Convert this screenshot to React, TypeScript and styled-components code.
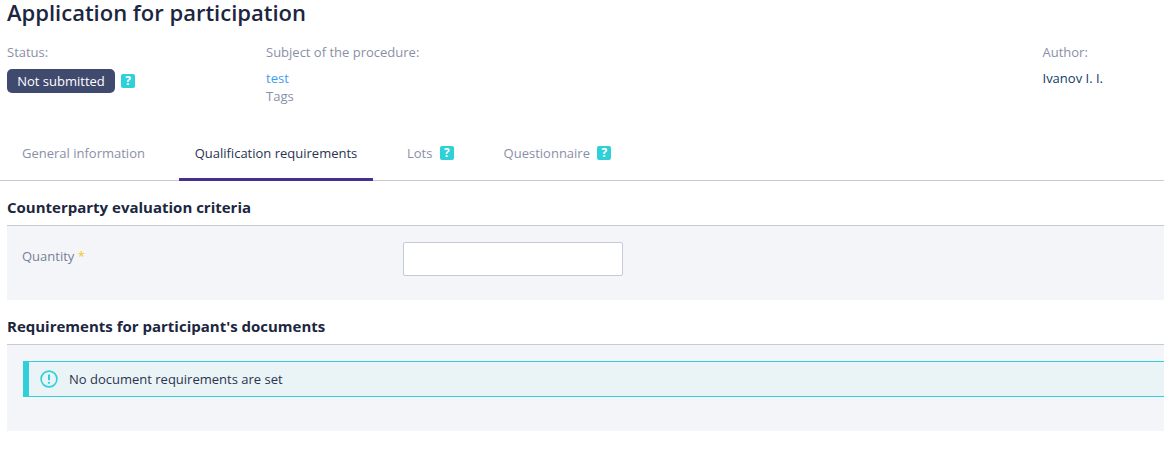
import React from "react";
import styled, { createGlobalStyle } from "styled-components";

const Global = createGlobalStyle`
  html, body { margin: 0; padding: 0; background: #fff; overflow: hidden; }
  body { font-family: "Open Sans", "Liberation Sans", sans-serif; font-size: 13px; color: #1f2a44; }
`;

const Page = styled.div`
  width: 1164px;
  height: 469px;
  overflow: hidden;
`;

const Title = styled.h1`
  margin: 0;
  padding-left: 7px;
  height: 24px;
  font-size: 22px;
  line-height: 24px;
  font-weight: 600;
  color: #1c2640;
`;

const Meta = styled.div`
  display: grid;
  grid-template-columns: 259px 776.5px 1fr;
  margin: 19px 0 0 7px;
  height: 88px;
`;

const MetaCol = styled.div`
  display: flex;
  flex-direction: column;
`;

const MetaLabel = styled.div`
  height: 18px;
  font-size: 13px;
  line-height: 18px;
  color: #8a8fa8;
  margin-bottom: 8px;
`;

const StatusRow = styled.div`
  display: flex;
  align-items: center;
  gap: 6px;
`;

const StatusBadge = styled.span`
  display: inline-block;
  width: 108px;
  height: 24px;
  background: #3f4a6e;
  border-radius: 5px;
  color: #fff;
  font-size: 13px;
  line-height: 24px;
  text-align: center;
`;

const Help = styled.span`
  display: inline-block;
  width: 14px;
  height: 14px;
  border-radius: 2px;
  background: #2fd0d8;
  color: #fff;
  font-size: 12px;
  font-weight: 700;
  line-height: 14px;
  text-align: center;
`;

const Link = styled.a`
  display: block;
  height: 18px;
  font-size: 13px;
  line-height: 18px;
  color: #3f9cf0;
`;

const Muted = styled.div`
  height: 18px;
  font-size: 13px;
  line-height: 18px;
  color: #8a8fa8;
`;

const Author = styled.div`
  height: 18px;
  font-size: 13px;
  line-height: 18px;
  color: #123a6a;
`;

const Tabs = styled.div`
  display: flex;
  gap: 18.7px;
  margin-top: 1px;
  height: 48px;
  padding-left: 6.5px;
  border-bottom: 1px solid #c5cad6;
`;

const Tab = styled.div<{ $active?: boolean }>`
  box-sizing: border-box;
  height: 49px;
  display: flex;
  align-items: center;
  gap: 7.5px;
  padding: 0 15.5px 5px;
  font-size: 13px;
  color: ${(p) => (p.$active ? "#2a3350" : "#8a8fa8")};
  border-bottom: 3px solid ${(p) => (p.$active ? "#46308f" : "transparent")};
`;

const SectionTitle = styled.h2<{ $top: number }>`
  margin: ${(p) => p.$top}px 0 0 7px;
  height: 35px;
  box-sizing: border-box;
  font-size: 15px;
  line-height: 20px;
  padding-top: 6px;
  font-weight: 700;
  color: #1c2640;
  border-bottom: 1px solid #c5cad6;
`;

const SectionBody = styled.div<{ $h: number }>`
  margin-left: 7px;
  height: ${(p) => p.$h}px;
  background: #f3f5f9;
  box-sizing: border-box;
  padding: 16px 0 0 16px;
`;

const FormRow = styled.div`
  display: grid;
  grid-template-columns: 380px 220px;
`;

const FieldLabel = styled.label`
  font-size: 13px;
  line-height: 18px;
  color: #7a7f94;
  margin-left: -1px;
  margin-top: 5px;
`;

const Star = styled.span`
  color: #fbc520;
`;

const Input = styled.input`
  width: 220px;
  height: 34px;
  box-sizing: border-box;
  border: 1px solid #c5cad6;
  border-radius: 2px;
  background: #fff;
`;

const Banner = styled.div`
  display: flex;
  align-items: center;
  gap: 11px;
  height: 36px;
  box-sizing: border-box;
  padding-left: 11px;
  background: #eaf4f6;
  border-top: 1px solid #2fd0d8;
  border-bottom: 1px solid #2fd0d8;
  border-left: 6px solid #2fd0d8;
  font-size: 13px;
  color: #2a3350;
`;

const BannerText = styled.span``;

const InfoIcon = () => (
  <svg width="18" height="18" viewBox="0 0 18 18" fill="none">
    <circle cx="9" cy="9" r="7.9" stroke="#2fd0d8" strokeWidth="1.6" />
    <path d="M9 4.6v5.6" stroke="#2fd0d8" strokeWidth="2" />
    <circle cx="9" cy="12.8" r="1.1" fill="#2fd0d8" />
  </svg>
);

export default function App() {
  return (
    <Page>
      <Global />
      <Title>Application for participation</Title>
      <Meta>
        <MetaCol>
          <MetaLabel>Status:</MetaLabel>
          <StatusRow>
            <StatusBadge>Not submitted</StatusBadge>
            <Help>?</Help>
          </StatusRow>
        </MetaCol>
        <MetaCol>
          <MetaLabel>Subject of the procedure:</MetaLabel>
          <Link>test</Link>
          <Muted>Tags</Muted>
        </MetaCol>
        <MetaCol>
          <MetaLabel>Author:</MetaLabel>
          <Author>Ivanov I. I.</Author>
        </MetaCol>
      </Meta>
      <Tabs>
        <Tab>General information</Tab>
        <Tab $active>Qualification requirements</Tab>
        <Tab>
          Lots <Help>?</Help>
        </Tab>
        <Tab>
          Questionnaire <Help>?</Help>
        </Tab>
      </Tabs>
      <SectionTitle $top={10}>Counterparty evaluation criteria</SectionTitle>
      <SectionBody $h={74}>
        <FormRow>
          <FieldLabel>
            Quantity <Star>*</Star>
          </FieldLabel>
          <Input />
        </FormRow>
      </SectionBody>
      <SectionTitle $top={10}>Requirements for participant's documents</SectionTitle>
      <SectionBody $h={86}>
        <Banner>
          <InfoIcon />
          <BannerText>No document requirements are set</BannerText>
        </Banner>
      </SectionBody>
    </Page>
  );
}
